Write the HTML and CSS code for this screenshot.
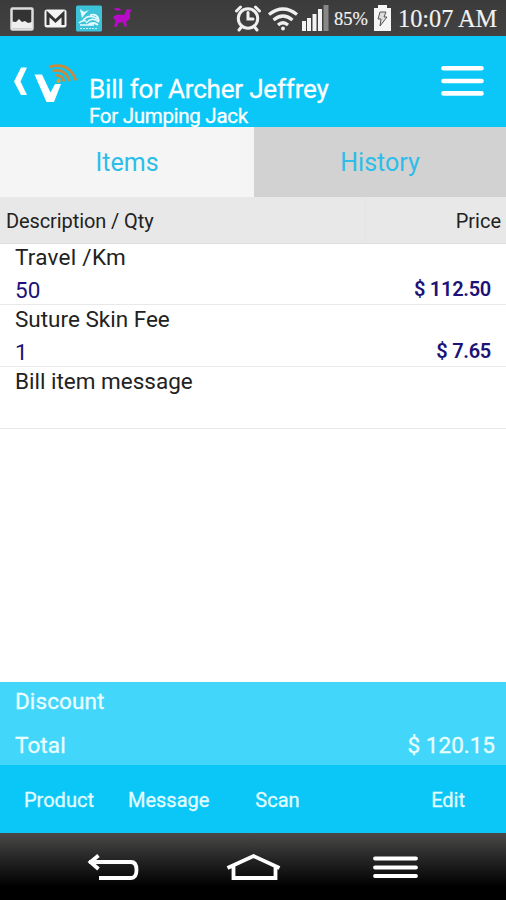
FILE: index.html
```html
<!DOCTYPE html>
<html lang="en">
<head>
<meta charset="utf-8">
<title>Bill for Archer Jeffrey</title>
<link rel="stylesheet" href="styles.css">
</head>
<body>
<div class="phone">
  <div class="status">
    <svg class="status-left" width="140" height="36" viewBox="0 0 140 36">
      <rect x="11.500" y="8.500" width="21" height="21" rx="1" fill="#333" stroke="#ddd" stroke-width="2.500"/>
      <path d="M12 28.500v-7l4 .5 3-3 3 3 3-1 3 2 4-1v6.500z" fill="#eee"/>
      <rect x="44.500" y="9.500" width="22" height="18" rx="2.500" fill="#f4f4f4"/>
      <path d="M48 25V14l7.500 7 7.500-7v11" fill="none" stroke="#333" stroke-width="3"/>
      <rect x="76" y="5.500" width="26" height="26" rx="1.500" fill="#3cc3d9"/>
      <path d="M80 9l4 3 5-2-4 4-3 4-1-4z" fill="#e6fbff"/>
      <path d="M79 23q3-3 7-2M83 21q5-8 15-2M86 23q6-7 13-1M88 25q5-4 10 0M90 15q8-2 9 6M80 25h14" fill="none" stroke="#e6fbff" stroke-width="1.700"/>
      <path d="M80 28.500h18" stroke="#c0f1fa" stroke-width="1.200" stroke-dasharray="2 1"/>
      <path d="M114 8.500q3 -1 6 0l1 1.500q-3 1-6 0zM113 17l3-2q5-1 8 0l3-6 5 1-2 2.500v6l-4 3.500 1 4.500h-2.500l-1.500-4-4 0-2.500 4.500h-2.500l1.500-6z" fill="#b80bc8"/>
    </svg>
    <svg class="status-icons" width="96" height="36" viewBox="234 0 96 36">
      <g fill="none" stroke="#f0f0f0" stroke-width="3" stroke-linecap="round">
        <circle cx="248" cy="18.500" r="9.700"/>
        <path d="M248 12.500v6.500h5"/>
        <path d="M236.500 11l4-4M259.500 11l-4-4M241 27.500l-2 2.500M255 27.500l2 2.500"/>
      </g>
      <g fill="none" stroke="#f0f0f0" stroke-width="3.200">
        <path d="M269 14.500q14-11 28 0M273.500 20q9.500-8 19 0M278 25q5-4.500 10 0"/>
        <circle cx="283" cy="28.500" r="1.200" fill="#f0f0f0" stroke-width="1.500"/>
      </g>
      <path d="M302 21h4v10h-4zM307 18h4v13h-4zM312.500 14h4v17h-4zM318 9h4v22h-4z" fill="#f4f4f4"/>
      <path d="M323.500 5h5v26h-5z" fill="#888"/>
    </svg>
    <span class="percent">85%</span>
    <svg class="battery" width="18" height="36" viewBox="373 0 18 36">
      <path d="M374 8h4V5h9v3h4v23h-17z" fill="#f6f6f6"/>
      <path d="M380 12h6l-2 5h3l-7 9 1-7h-3z" fill="#ddd" stroke="#555" stroke-width="1"/>
    </svg>
    <span class="clock">10:07 AM</span>
  </div>
  <header class="header">
    <svg class="logo" width="89" height="91" viewBox="0 36 89 91">
      <path d="M21 67.500h6L20.500 81.500 27 95h-6l-7-13.500z" fill="#fff"/>
      <path d="M34.500 74.500h7.500l8.500 18 4.500-8.500h6L54 102h-7.500z" fill="#fff"/>
      <circle cx="58.500" cy="81" r="2" fill="#e5a029"/>
      <g fill="none" stroke="#c98a3c" stroke-width="2.600"><path d="M55 75.500q7-1 9 6"/><path d="M52.500 71q13-3 17 10"/><path d="M49 67q20-6 27 13.500"/></g>
    </svg>
    <div class="heading">
      <h1 class="title">Bill for Archer Jeffrey</h1>
      <p class="subtitle">For Jumping Jack</p>
    </div>
    <svg class="menu" width="44" height="91" viewBox="440 36 44 91">
      <path d="M443.500 68.300h38M443.500 81h38M443.500 93.400h38" stroke="#fff" stroke-width="4.600" stroke-linecap="round"/>
    </svg>
  </header>
  <nav class="tabs"><div class="tab active">Items</div><div class="tab">History</div></nav>
  <div class="columns"><div class="col-desc">Description / Qty</div><div class="col-price">Price</div></div>
  <main class="list">
    <div class="item"><div class="name travel">Travel /Km</div><div class="line"><span class="qty">50</span><span class="price">$ 112.50</span></div></div>
    <div class="item"><div class="name">Suture Skin Fee</div><div class="line"><span class="qty">1</span><span class="price">$ 7.65</span></div></div>
    <div class="item"><div class="name">Bill item message</div></div>
  </main>
  <section class="totals">
    <div class="total-row discount"><span>Discount</span></div>
    <div class="total-row"><span>Total</span><span class="amount">$ 120.15</span></div>
  </section>
  <footer class="actions"><span>Product</span><span class="message">Message</span><span class="scan">Scan</span><span class="edit">Edit</span></footer>
  <div class="softkeys">
    <svg width="506" height="67" viewBox="0 833 506 67" fill="none" stroke="#fff" stroke-width="3.800">
      <path d="M89 862h42q5.500 0 5.500 8t-5.500 8H99M98.500 855.500l-8 6.500 8 7"/>
      <path d="M227.500 868l26-12 26 12M233.500 866v12h42v-12"/>
      <path d="M375 858.500h41M375 867.500h41M375 876h41" stroke-linecap="round"/>
    </svg>
  </div>
</div>
</body>
</html>
```
FILE: styles.css
```css
* { box-sizing: border-box; }
body { margin: 0; font-family: Roboto, sans-serif; background: #fff; }
h1, p { margin: 0; font-weight: 400; }
svg { display: block; flex: none; }
.phone { width: 506px; height: 900px; display: flex; flex-direction: column; overflow: hidden; }
.status { height: 36px; flex: none; display: flex; align-items: center; background: linear-gradient(#3b3b3b, #424242); color: #f2f2f2; font-family: "Liberation Serif", serif; white-space: nowrap; -webkit-text-stroke: 0.15px #f2f2f2; }
.status-icons { margin-left: 94px; }
.percent { font-size: 18.5px; margin-left: 4px; width: 39px; line-height: 40px; padding-top: 1px; }
.clock { font-size: 24.3px; line-height: 38px; margin-left: 7px; padding-top: 1px; }
.header { height: 91px; flex: none; display: flex; background: #0ac7f8; color: #fff; }
.heading { width: 351px; padding-top: 39px; white-space: nowrap; -webkit-text-stroke: 0.3px #fff; }
.title { font-size: 26px; line-height: 29px; letter-spacing: -0.19px; }
.subtitle { font-size: 20.5px; line-height: 24px; letter-spacing: -0.29px; }
.tabs { height: 70px; flex: none; display: flex; color: #2dbde9; font-size: 25px; line-height: 71px; text-align: center; }
.tab { width: 252px; background: #d2d2d2; }
.tab.active { width: 254px; background: #f5f5f5; }
.columns { height: 47px; flex: none; display: flex; background: #e8e8e8; border-bottom: 1px solid #ddd; font-size: 20px; line-height: 48px; color: #222; }
.col-desc { width: 366px; padding-left: 6px; border-right: 1px solid #e4e4e4; letter-spacing: -0.1px; }
.col-price { flex: 1; text-align: right; padding-right: 5px; }
.list { flex: 1; min-height: 0; }
.item { height: 62px; border-bottom: 1px solid #e9e9e9; padding: 1px 15px 0; }
.item:first-child { height: 61px; padding-top: 0; }
.name { font-size: 22.5px; line-height: 27px; color: #222; }
.name.travel { letter-spacing: 0.25px; }
.line { display: flex; justify-content: space-between; color: #1c1278; line-height: 36px; }
.qty { font-size: 22.5px; line-height: 39px; }
.price { font-size: 20px; font-weight: 600; letter-spacing: -0.28px; }
.totals { height: 83px; flex: none; padding: 0 11px 0 15px; background: #43d6fb; color: #eaffff; font-size: 22.5px; -webkit-text-stroke: 0.3px #eaffff; letter-spacing: 0.1px; }
.total-row { display: flex; justify-content: space-between; line-height: 48px; }
.amount { letter-spacing: 0; }
.discount { line-height: 39px; }
.actions { height: 68px; flex: none; display: flex; background: #0ac7f8; color: #e2fcff; font-size: 20px; line-height: 70px; padding: 0 41px 0 24px; -webkit-text-stroke: 0.3px #e2fcff; }
.message { margin-left: 34px; }
.scan { margin-left: 46px; }
.edit { margin-left: auto; }
.softkeys { height: 67px; flex: none; background: linear-gradient(#4b4a48, #282828 35%, #000 80%); }
```
